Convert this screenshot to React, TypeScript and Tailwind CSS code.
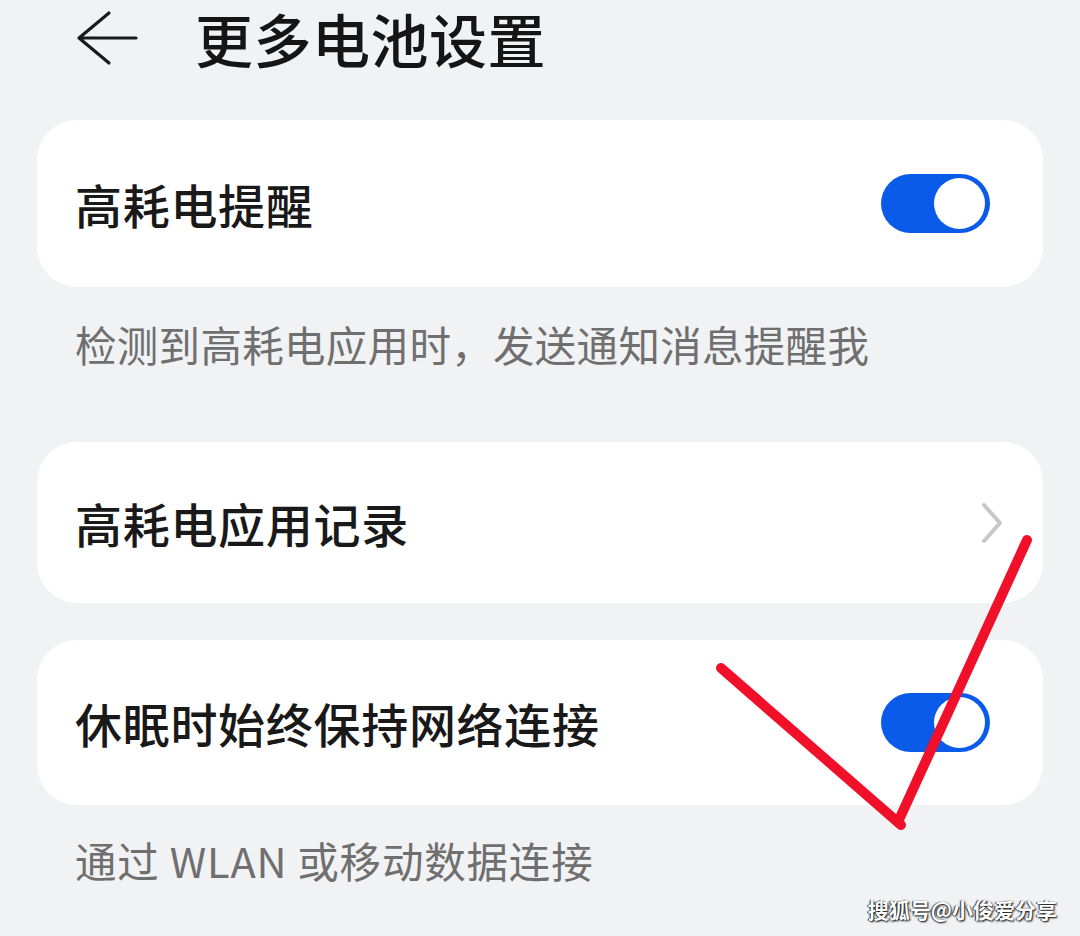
import React from 'react';

const CJK = '"Noto Sans CJK SC", "Noto Sans", sans-serif';

function Toggle() {
  return (
    <div className="w-[109px] h-[59px] rounded-full bg-[#0b5bea] flex items-center justify-end pr-[5px]">
      <div className="w-[51px] h-[51px] rounded-full bg-white" />
    </div>
  );
}

function Chevron() {
  return (
    <svg width="24" height="42" viewBox="0 0 24 42" fill="none">
      <path d="M4 3 L20 21 L4 39" stroke="#c7c7c9" strokeWidth="4" strokeLinecap="round" strokeLinejoin="round" />
    </svg>
  );
}

function Card({ label, right, height }: { label: string; right: React.ReactNode; height: string }) {
  return (
    <div className={`${height} bg-white rounded-[40px] flex items-center justify-between pl-[38px] pr-[53px]`}>
      <span className="text-[47px] font-medium text-[#191919] leading-none tracking-[0.7px]">{label}</span>
      {right}
    </div>
  );
}

export default function App() {
  return (
    <div className="relative w-full min-h-[936px] bg-[#f1f2f4] overflow-hidden px-[37px]" style={{ fontFamily: CJK }}>
      {/* header */}
      <div className="h-[76px] flex items-center">
        <svg className="ml-[39px]" width="62" height="56" viewBox="0 0 62 56" fill="none">
          <path d="M33 3 L3 28 L33 53 M3 28 H60" stroke="#1a1a1a" strokeWidth="3.2" strokeLinecap="round" strokeLinejoin="round" />
        </svg>
        <h1 className="ml-[57px] text-[58px] font-medium text-[#151515] leading-[76px] tracking-[0.5px]">更多电池设置</h1>
      </div>

      <div className="mt-[44px]">
        <Card label="高耗电提醒" height="h-[167px]" right={<Toggle />} />
      </div>
      <p className="mt-[37px] pl-[38px] text-[41.5px] leading-[41px] tracking-[0.3px] text-[#6f6f6f]">检测到高耗电应用时，发送通知消息提醒我</p>

      <div className="mt-[77px]">
        <Card label="高耗电应用记录" height="h-[161px]" right={<div className="mr-[-14px]"><Chevron /></div>} />
      </div>
      <div className="mt-[37px]">
        <Card label="休眠时始终保持网络连接" height="h-[165px]" right={<Toggle />} />
      </div>
      <p className="mt-[35px] pl-[38px] text-[41.5px] leading-[41px] tracking-[0.8px] text-[#6f6f6f]">通过 WLAN 或移动数据连接</p>

      {/* red check drawn over the page */}
      <svg className="absolute left-0 top-0 pointer-events-none" width="1080" height="936" viewBox="0 0 1080 936" fill="none">
        <path d="M721 668 L901 825" stroke="#f0102a" strokeWidth="10" strokeLinecap="round" />
        <path d="M898 822 L1027 540" stroke="#f0102a" strokeWidth="10" strokeLinecap="round" />
      </svg>

      {/* watermark */}
      <div
        className="absolute right-[23px] top-[899px] text-[21px] font-bold text-white leading-none"
        style={{ textShadow: '1px 1px 2px #000, -1px 0 1px #333' }}
      >
        搜狐号@小俊爱分享
      </div>
    </div>
  );
}
